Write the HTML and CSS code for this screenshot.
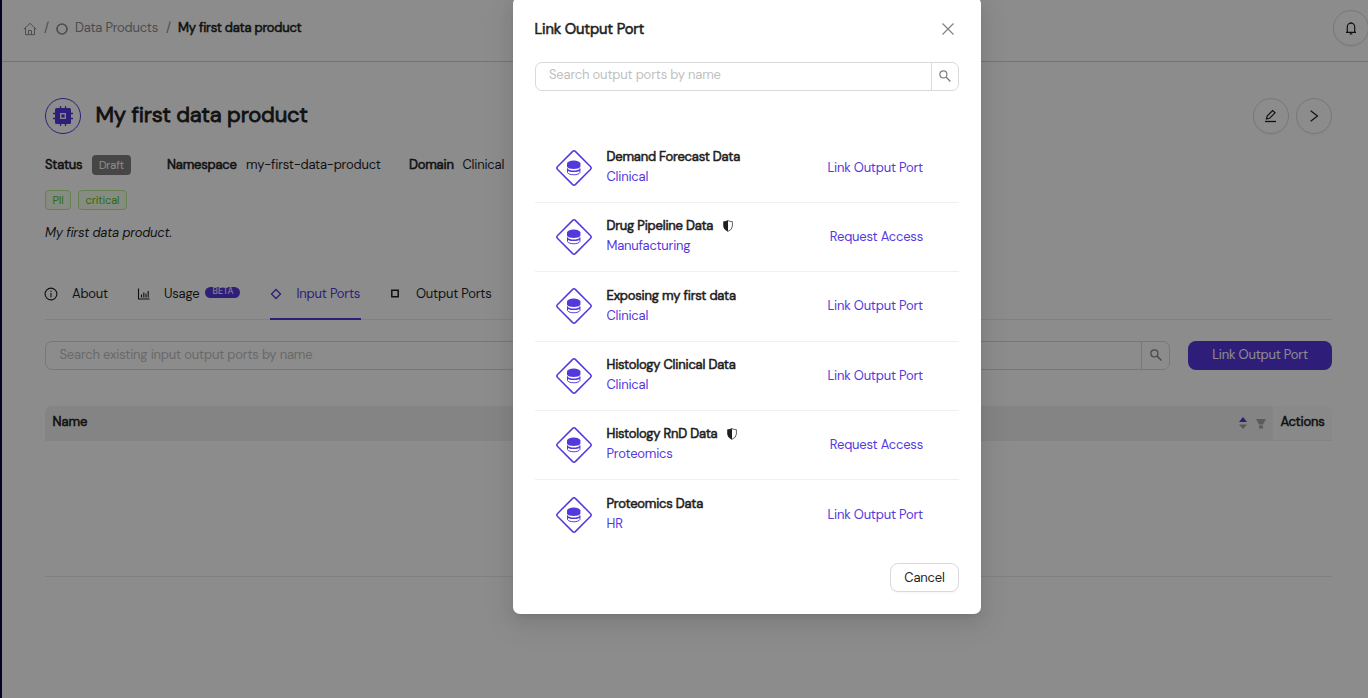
FILE: index.html
```html
<!DOCTYPE html>
<html lang="en">
<head>
<meta charset="utf-8">
<title>My first data product</title>
<link rel="stylesheet" href="styles.css">
</head>
<body>
<svg class="defs" aria-hidden="true">
  <symbol id="search" viewBox="0 0 12 12"><circle cx="4.4" cy="4.4" r="3.5" fill="none" stroke="currentColor" stroke-width="1.2"/><path d="M7 7l4.4 4.4" stroke="currentColor" stroke-width="1.4"/></symbol>
  <symbol id="port" viewBox="0 0 38 38"><rect x="6.300" y="6.300" width="25.400" height="25.400" rx="2.200" transform="rotate(45 19 19)" fill="none" stroke="currentColor" stroke-width="1.500"/><ellipse cx="18.700" cy="14.600" rx="6.700" ry="3.100" fill="currentColor"/><path d="M12 14.600h13.400v3.200c-1.200 3-12.200 3-13.400 0z" fill="currentColor"/><path d="M12.500 19.300v4.200c1.200 3 11.200 3 12.400 0v-4.200" fill="none" stroke="currentColor"/><path d="M12.500 20.300c1.200 2.600 11.200 2.600 12.400 0" fill="none" stroke="currentColor" stroke-width="1.600"/></symbol>
  <symbol id="shield" viewBox="0 0 10 12"><path d="M5 .6Q7 1.700 9.400 1.700V6Q9.400 9.500 5 11.400Q.6 9.500.6 6V1.700Q3 1.700 5 .6z" fill="none" stroke="currentColor" stroke-width=".7"/><path d="M5 .6V11.400Q.6 9.500.6 6V1.700Q3 1.700 5 .6z" fill="currentColor"/></symbol>
</svg>
<div class="page">
  <header class="topbar">
    <nav class="crumbs">
      <svg class="home" viewBox="0 0 14 14"><path d="M.8 7.300L7 1.300l6.200 6M2.500 6v6.700h9V6M5.500 12.500V8.500h3v4" fill="none" stroke="currentColor"/></svg>
      <span class="sep">/</span>
      <svg class="ring" viewBox="0 0 12 12"><circle cx="6" cy="6" r="4.300" fill="none" stroke="currentColor" stroke-width="1.400"/></svg>
      <span class="crumb">Data Products</span>
      <span class="sep sep-last">/</span>
      <b class="current">My first data product</b>
    </nav>
    <button class="round"><svg width="14" height="14" viewBox="0 0 14 14"><path d="M3.300 11V6a3.700 3.900 0 0 1 7.400 0v5M7 1v1.500" fill="none" stroke="currentColor" stroke-width="1.200"/><path d="M2 11.300h10M5.700 12.800h2.600" stroke="currentColor" stroke-width="1.200"/></svg></button>
  </header>
  <main class="content">
    <div class="heading">
      <span class="avatar"><svg width="20" height="20" viewBox="0 0 20 20"><path d="M7.500 0v20M12.500 0v20M0 7.500h20M0 12.500h20" stroke="currentColor" stroke-width="1.300"/><rect x="2" y="2" width="16" height="16" rx="1.500" fill="currentColor"/><rect x="7.700" y="7.700" width="4.600" height="4.600" fill="none" stroke="#fff" stroke-width="1.300"/></svg></span>
      <h1 class="title">My first data product</h1>
      <button class="round"><svg width="14" height="14" viewBox="0 0 14 14"><path d="M1 12.500h11" stroke="currentColor" stroke-width="1.300"/><path d="M2.500 10l.7-3L8.700 1.500l2.300 2.300-5.500 5.500z" fill="none" stroke="currentColor" stroke-width="1.200"/></svg></button>
      <button class="round"><svg width="14" height="14" viewBox="0 0 14 14"><path d="M3.700 1.700L10.500 7l-6.800 5.300" fill="none" stroke="currentColor" stroke-width="1.200"/></svg></button>
    </div>
    <div class="meta">
      <b class="m-status">Status</b><span class="draft">Draft</span>
      <b class="m-ns">Namespace</b><span class="v-ns">my-first-data-product</span>
      <b class="m-domain">Domain</b><span class="v-domain">Clinical</span>
    </div>
    <div class="tags"><span class="tag pii">PII</span><span class="tag critical">critical</span></div>
    <p class="desc">My first data product.</p>
    <div class="tabs">
      <div class="tab t-about"><svg width="14" height="14" viewBox="0 0 14 14"><circle cx="7" cy="7" r="5.900" fill="none" stroke="currentColor" stroke-width="1.100"/><path d="M7 6v4.200M7 3.700v1.300" stroke="currentColor" stroke-width="1.100"/></svg><span>About</span></div>
      <div class="tab t-usage"><svg width="14" height="14" viewBox="0 0 14 14"><path d="M1.500 1.500v10.500h11M4.500 10.500V7.500M6.800 10.500V5.500M9 10.500V6.500M11.200 10.500V4" fill="none" stroke="currentColor" stroke-width="1.100"/></svg><span>Usage</span><em class="beta">BETA</em></div>
      <div class="tab t-in"><svg width="14" height="14" viewBox="0 0 14 14"><path d="M7 2.500L11.500 7 7 11.500 2.500 7z" fill="none" stroke="currentColor" stroke-width="1.300"/></svg><span>Input Ports</span></div>
      <div class="tab t-out"><svg width="14" height="14" viewBox="0 0 14 14"><path d="M3.800 3.300h6.400v6.400H3.800z" fill="none" stroke="currentColor" stroke-width="1.500"/></svg><span>Output Ports</span></div>
    </div>
    <div class="tools">
      <div class="search"><span class="ph ph-main">Search existing input output ports by name</span><i class="go"><svg width="12" height="12"><use href="#search"/></svg></i></div>
      <button class="primary"><span>Link Output Port</span></button>
    </div>
    <div class="thead">
      <b class="th-name">Name</b>
      <svg class="sorter" viewBox="0 0 8 12"><path d="M0 5L4 0l4 5z" fill="#5438dc"/><path d="M0 7.500h8L4 12z" fill="#a0a0a0"/></svg>
      <svg class="filter" viewBox="0 0 10 10"><path d="M0 0h10L7 5.500H3zM3 6.500h4V9.500H3z" fill="#a6a6a6"/></svg>
      <b class="th-actions"><span>Actions</span></b>
    </div>
    <div class="tbody"></div>
  </main>
</div>
<div class="mask">
  <section class="modal">
    <div class="modal-head"><b>Link Output Port</b><svg width="12" height="12" viewBox="0 0 12 12"><path d="M.5.5l11 11M11.500.5l-11 11" stroke="currentColor" stroke-width="1.200"/></svg></div>
    <div class="search"><span class="ph ph-modal">Search output ports by name</span><i class="go"><svg width="12" height="12"><use href="#search"/></svg></i></div>
    <ul class="ports">
      <li class="port"><svg class="picon"><use href="#port"/></svg><div class="info"><b>Demand Forecast Data</b><span class="dom">Clinical</span></div><a class="link">Link Output Port</a></li>
      <li class="port"><svg class="picon"><use href="#port"/></svg><div class="info"><b>Drug Pipeline Data<svg class="shield"><use href="#shield"/></svg></b><span class="dom">Manufacturing</span></div><a class="link">Request Access</a></li>
      <li class="port"><svg class="picon"><use href="#port"/></svg><div class="info"><b>Exposing my first data</b><span class="dom">Clinical</span></div><a class="link">Link Output Port</a></li>
      <li class="port"><svg class="picon"><use href="#port"/></svg><div class="info"><b>Histology Clinical Data</b><span class="dom">Clinical</span></div><a class="link">Link Output Port</a></li>
      <li class="port"><svg class="picon"><use href="#port"/></svg><div class="info"><b>Histology RnD Data<svg class="shield"><use href="#shield"/></svg></b><span class="dom">Proteomics</span></div><a class="link">Request Access</a></li>
      <li class="port"><svg class="picon"><use href="#port"/></svg><div class="info"><b>Proteomics Data</b><span class="dom">HR</span></div><a class="link">Link Output Port</a></li>
    </ul>
    <div class="foot"><button class="cancel">Cancel</button></div>
  </section>
</div>
</body>
</html>
```

FILE: styles.css
```css
* { box-sizing: border-box; }
body { margin: 0; height: 698px; overflow: hidden; position: relative; background: #fff; color: #1f1f1f; font: 13px/20px "DM Sans", Inter, sans-serif; letter-spacing: -.21px; white-space: nowrap; }
b { font-weight: 400; -webkit-text-stroke: .55px currentColor; }
button { font: inherit; color: inherit; padding: 0; letter-spacing: inherit; }
svg { display: block; flex: none; }
.defs { position: absolute; width: 0; height: 0; }
.page { height: 698px; border-left: 2px solid #080844; }
.topbar { height: 62px; border-bottom: 1px solid #d4d4d4; display: flex; align-items: flex-start; padding: 10px 0 0 21px; margin-right: -1px; }
.crumbs { display: flex; align-items: center; flex: 1; height: 35px; color: #8c8c8c; }
.home { width: 14px; height: 14px; margin: 3px 7px 0 0; }
.sep { width: 5px; margin-right: 6px; }
.ring { width: 14px; height: 14px; margin: 3px 6px 0 0; }
.crumb { width: 84px; }
.sep-last { margin: 0 7px; }
.current { color: #1f1f1f; }
.round { width: 36px; height: 36px; border: 1px solid #d9d9d9; border-radius: 50%; background: #fff; display: flex; align-items: center; justify-content: center; flex: none; box-shadow: 0 2px 0 rgba(0,0,0,.02); }
.content { padding: 36px 36px 0 43px; }
.heading { display: flex; align-items: center; height: 36px; gap: 7px; }
.avatar { width: 36px; height: 36px; border: 1px solid #5438dc; border-radius: 50%; color: #5438dc; display: flex; align-items: center; justify-content: center; }
.title { flex: 1; margin: 0 0 0 7.5px; padding-bottom: 2px; font-size: 22px; line-height: 34px; font-weight: 400; -webkit-text-stroke: .8px currentColor; letter-spacing: -.2px; }
.meta { display: flex; align-items: center; height: 20px; margin-top: 21px; }
.m-status { width: 47px; }
.draft { width: 39px; height: 20px; border-radius: 4px; background: #808080; color: #fff; font-size: 11px; letter-spacing: -.1px; text-align: center; margin-right: 36px; }
.m-ns { width: 79px; }
.v-ns { width: 163px; }
.m-domain { width: 53.5px; }
.tags { display: flex; gap: 7px; margin-top: 15px; }
.tag { height: 20px; border: 1px solid #b7eb8f; background: #f6ffed; border-radius: 4px; color: #52c41a; font-size: 11px; letter-spacing: -.1px; line-height: 19px; text-align: center; }
.pii { width: 26px; }
.critical { width: 49px; }
.desc { margin: 13px 0 0; font-style: italic; }
.tabs { display: flex; margin-top: 25px; height: 52px; border-bottom: 1px solid #e9e9e9; }
.tab { display: flex; align-items: center; height: 52px; gap: 14px; margin-right: 28px; }
.tab svg { width: 14px; margin-left: -1px; }
.t-about { width: 64px; margin-right: 29px; }
.t-usage { width: 105px; gap: 13px; margin-right: 26.5px; }
.beta { height: 11px; width: 35px; border-radius: 6px; background: #5438dc; color: #fff; font: normal 9px/9px "DM Sans", Inter, sans-serif; letter-spacing: 0; text-align: center; margin: -4px 0 0 -7px; }
.t-in { width: 91.5px; color: #5438dc; border-bottom: 2px solid #5438dc; padding-top: 2px; }
.tab.t-in svg { margin-left: -.5px; }
.tab.t-in { gap: 13.5px; }
.tools { display: flex; margin-top: 21px; gap: 18px; height: 29px; }
.search { display: flex; flex: 1; height: 29px; border: 1px solid #d9d9d9; border-radius: 7px; background: #fff; }
.ph { flex: 1; padding-left: 13.5px; line-height: 25px; color: #bfbfbf; letter-spacing: -.19px; }
.go { width: 28px; border-left: 1px solid #d9d9d9; color: #808080; display: flex; align-items: center; justify-content: center; padding-bottom: 2px; }
.modal .go { width: 27px; }
.modal .ph { padding-left: 13px; line-height: 24px; }
.primary { width: 144px; border: 0; border-radius: 8px; background: #5438dc; color: #fff; padding-bottom: 2px; }
.thead { display: flex; align-items: center; height: 35px; margin-top: 36px; background: #f0f0f0; border-radius: 7px 7px 0 0; }
.th-name { flex: 1; padding: 0 0 4px 7.5px; letter-spacing: -.05px; }
.sorter { width: 8px; height: 12px; margin: -2px 9px 0 0; }
.filter { width: 10px; height: 10px; margin-right: 7.5px; }
.th-actions { width: 59px; height: 35px; padding: 6px 0 0 7.5px; background: #fafafa; border-bottom: 1px solid #f0f0f0; border-radius: 0 7px 0 0; }
.tbody { height: 136px; border-bottom: 1px solid #e9e9e9; }
.mask { position: absolute; inset: 0; background: rgba(0,0,0,.45); display: flex; align-items: flex-start; padding-left: 513px; }
.modal { width: 468px; height: 617px; margin: -3px 0 0; padding: 21px 22px; background: #fff; border-radius: 7px; box-shadow: 0 6px 16px rgba(0,0,0,.08), 0 3px 6px -4px rgba(0,0,0,.12), 0 9px 28px 8px rgba(0,0,0,.05); }
.modal-head { display: flex; justify-content: space-between; align-items: center; height: 22px; padding-right: 5px; margin-bottom: 22px; font-size: 14.8px; }
.modal-head svg { color: #808080; }
.modal-head b { margin-left: -.5px; letter-spacing: -.19px; }
.ports { list-style: none; margin: 42.6px 0 0; padding: 0; }
.port { display: flex; align-items: center; height: 69.35px; padding: 0 36px 0 20px; border-bottom: 1px solid #f0f0f0; }
.port:last-child { border: 0; }
.picon { width: 38px; height: 38px; color: #5438dc; margin-right: 13.5px; }
.info { flex: 1; line-height: 19.5px; padding-bottom: 2.1px; }
.info b { display: flex; align-items: center; }
.info .dom { display: block; padding-top: .4px; }
.shield { width: 10px; height: 12px; margin-left: 9.5px; }
.dom, .link { color: #5438dc; }
.foot { display: flex; justify-content: flex-end; margin-top: 13px; }
.cancel { width: 69px; height: 29px; border: 1px solid #d9d9d9; border-radius: 8px; background: #fff; box-shadow: 0 2px 0 rgba(0,0,0,.02); padding-top: 1px; }
```
